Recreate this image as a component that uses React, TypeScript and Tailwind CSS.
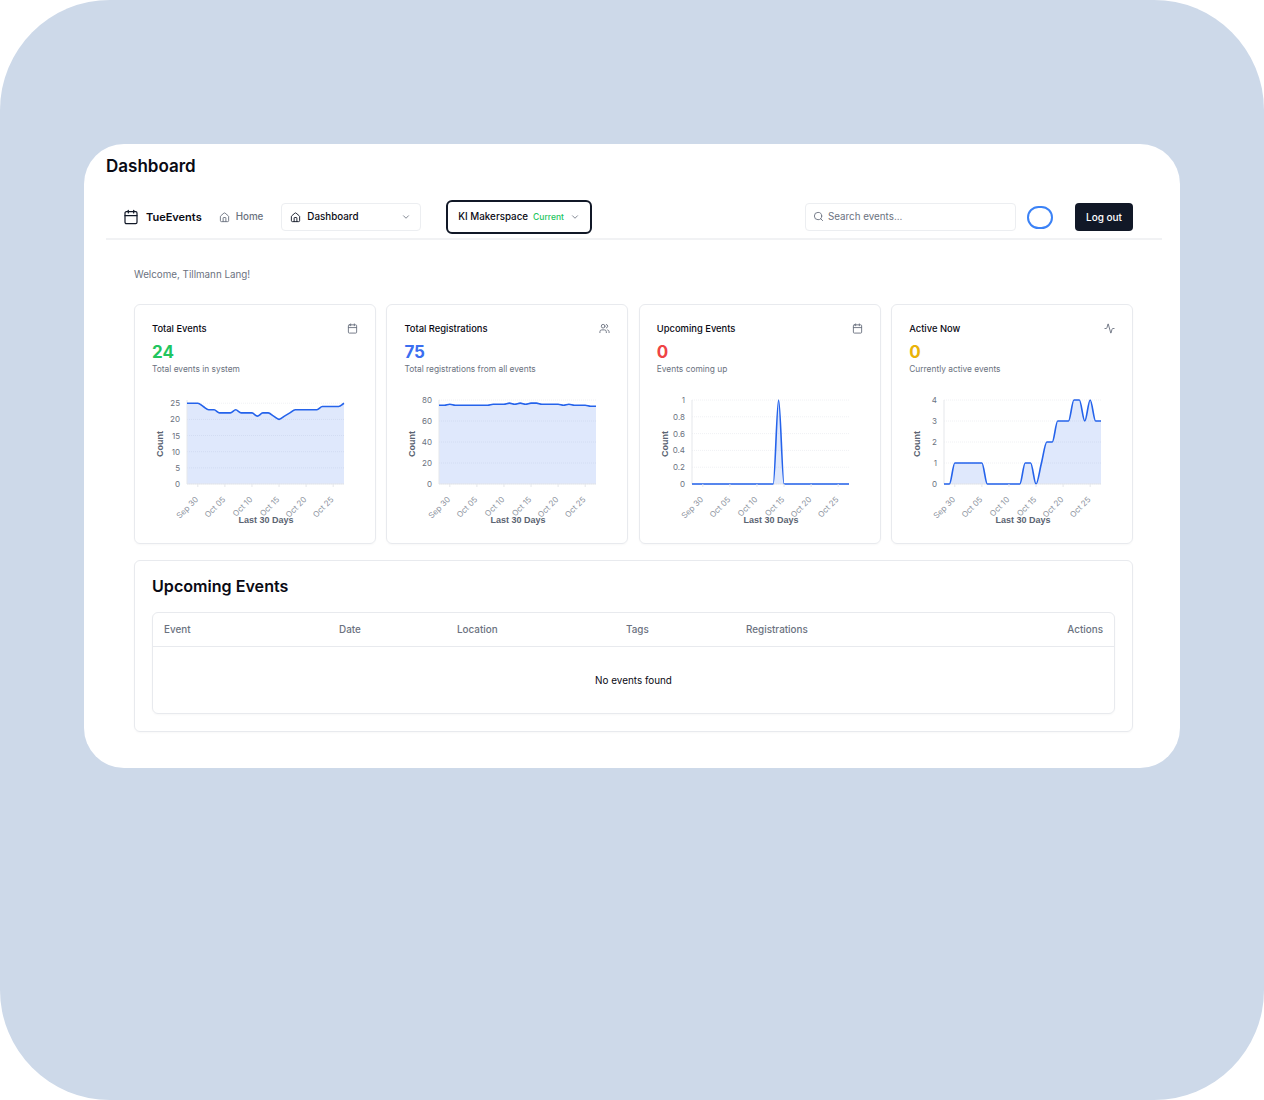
import React from 'react';
import { Activity, Calendar, ChevronDown, House, Search, Users } from 'lucide-react';

interface ChartProps {
  data: number[];
  max: number;
  ticks: number[];
}

const PLOT_LEFT = 35;
const PLOT_RIGHT = 192;
const PLOT_TOP = 15;
const PLOT_BOTTOM = 99;

const DATES = ['Sep 30', 'Oct 05', 'Oct 10', 'Oct 15', 'Oct 20', 'Oct 25'];

// same idea as d3's monotoneX, the line never overshoots the points
const monotonePath = (pts: [number, number][]) => {
  const n = pts.length;
  const slopes: number[] = [];
  for (let i = 0; i < n - 1; i++) {
    slopes.push((pts[i + 1][1] - pts[i][1]) / (pts[i + 1][0] - pts[i][0]));
  }
  const tangents = pts.map((_, i) => {
    if (i === 0) return slopes[0];
    if (i === n - 1) return slopes[n - 2];
    const a = slopes[i - 1];
    const b = slopes[i];
    if (a * b <= 0) return 0;
    return (2 * a * b) / (a + b);
  });
  let d = `M${pts[0][0]},${pts[0][1]}`;
  for (let i = 0; i < n - 1; i++) {
    const h = (pts[i + 1][0] - pts[i][0]) / 3;
    d += `C${pts[i][0] + h},${pts[i][1] + h * tangents[i]} ${pts[i + 1][0] - h},${pts[i + 1][1] - h * tangents[i + 1]} ${pts[i + 1][0]},${pts[i + 1][1]}`;
  }
  return d;
};

const MiniChart: React.FC<ChartProps> = ({ data, max, ticks }) => {
  const step = (PLOT_RIGHT - PLOT_LEFT) / (data.length - 1);
  const toY = (v: number) => PLOT_BOTTOM - (v / max) * (PLOT_BOTTOM - PLOT_TOP);
  const line = monotonePath(data.map((v, i) => [PLOT_LEFT + i * step, toY(v)]));
  const area = `${line}L${PLOT_RIGHT},${PLOT_BOTTOM}L${PLOT_LEFT},${PLOT_BOTTOM}Z`;

  return (
    <svg width="207" height="150" className="block">
      {ticks.map((t) => (
        <g key={t}>
          <line x1={PLOT_LEFT} x2={PLOT_RIGHT} y1={toY(t)} y2={toY(t)} stroke="#f0f1f4" strokeWidth="1" strokeDasharray="1 1" />
          <text x="28" y={toY(t) + 3} textAnchor="end" fontSize="8" fill="#6b7280" fontFamily="Inter, sans-serif">
            {t}
          </text>
        </g>
      ))}
      <path d={area} fill="#2563eb" fillOpacity="0.15" />
      <line x1={PLOT_LEFT} x2={PLOT_LEFT} y1={PLOT_TOP} y2={PLOT_BOTTOM} stroke="#e5e7eb" />
      <line x1={PLOT_LEFT} x2={PLOT_RIGHT} y1={PLOT_BOTTOM} y2={PLOT_BOTTOM} stroke="#e5e7eb" />
      <path d={line} fill="none" stroke="#2563eb" strokeWidth="1.6" />
      {DATES.map((label, i) => {
        const x = PLOT_LEFT + (2 + i * 5) * step;
        return (
          <g key={label}>
            <line x1={x} x2={x} y1={PLOT_BOTTOM} y2={PLOT_BOTTOM + 3} stroke="#e5e7eb" />
            <text
              x={x + 1}
              y={PLOT_BOTTOM + 16}
              textAnchor="end"
              fontSize="8"
              fill="#8b929e"
              fontFamily="Inter, sans-serif"
              transform={`rotate(-45 ${x + 1} ${PLOT_BOTTOM + 16})`}
            >
              {label}
            </text>
          </g>
        );
      })}
      <text x="114" y="138" textAnchor="middle" fontSize="9" fontWeight="700" fill="#5b6472" fontFamily="'Liberation Sans', sans-serif">
        Last 30 Days
      </text>
      <text
        x="11"
        y="59"
        textAnchor="middle"
        fontSize="9"
        fontWeight="700"
        fill="#5b6472"
        fontFamily="'Liberation Sans', sans-serif"
        transform="rotate(-90 11 59)"
      >
        Count
      </text>
    </svg>
  );
};

const stats = [
  {
    title: 'Total Events',
    value: '24',
    valueClass: 'text-[#22c55e]',
    note: 'Total events in system',
    icon: Calendar,
    max: 26,
    ticks: [0, 5, 10, 15, 20, 25],
    data: [25, 25, 25, 24, 23, 23, 22, 22, 22, 23, 22, 22, 22, 21, 22, 22, 21, 20, 21, 22, 23, 23, 23, 23, 23, 24, 24, 24, 24, 25],
  },
  {
    title: 'Total Registrations',
    value: '75',
    valueClass: 'text-[#3b6ef0]',
    note: 'Total registrations from all events',
    icon: Users,
    max: 80,
    ticks: [0, 20, 40, 60, 80],
    data: [75, 75, 76, 75, 75, 75, 75, 75, 75, 75, 76, 76, 76, 77, 76, 77, 76, 77, 77, 76, 76, 76, 76, 75, 76, 75, 75, 75, 74, 74],
  },
  {
    title: 'Upcoming Events',
    value: '0',
    valueClass: 'text-[#ef4444]',
    note: 'Events coming up',
    icon: Calendar,
    max: 1,
    ticks: [0, 0.2, 0.4, 0.6, 0.8, 1],
    data: [0, 0, 0, 0, 0, 0, 0, 0, 0, 0, 0, 0, 0, 0, 0, 0, 1, 0, 0, 0, 0, 0, 0, 0, 0, 0, 0, 0, 0, 0],
  },
  {
    title: 'Active Now',
    value: '0',
    valueClass: 'text-[#eab308]',
    note: 'Currently active events',
    icon: Activity,
    max: 4,
    ticks: [0, 1, 2, 3, 4],
    data: [0, 0, 1, 1, 1, 1, 1, 1, 0, 0, 0, 0, 0, 0, 0, 1, 1, 0, 1, 2, 2, 3, 3, 3, 4, 4, 3, 4, 3, 3],
  },
];

const columns = ['Event', 'Date', 'Location', 'Tags', 'Registrations'];

const App: React.FC = () => {
  return (
    <div className="h-[1100px] bg-white font-['Inter',sans-serif] text-[#0a0a14]">
      <div className="h-full rounded-[110px] bg-[#cdd9e9] px-[84px] pt-[144px]">
        <div className="h-[624px] rounded-[40px] bg-white px-[22px]">
          <h1 className="pt-[11px] text-[17px] leading-[22px] font-semibold">Dashboard</h1>

          <nav className="mr-[-4px] mt-[19px] flex h-[44px] items-center border-b-2 border-[#f1f2f4] pl-[17px] pr-[29px]">
            <Calendar className="h-[16px] w-[16px] text-[#111827]" strokeWidth={1.8} />
            <span className="ml-[7px] text-[11px] font-semibold">TueEvents</span>
            <House className="ml-[17px] h-[11px] w-[11px] text-[#6b7280]" />
            <span className="ml-[6px] text-[9.8px] font-medium text-[#6b7280]">Home</span>
            <div className="ml-[18px] flex h-[28px] w-[140px] items-center rounded-[4px] border border-[#eceef1] pl-[8px] pr-[9px]">
              <House className="h-[11px] w-[11px] text-[#111827]" />
              <span className="ml-[6px] text-[9.8px] font-medium">Dashboard</span>
              <ChevronDown className="ml-auto h-[10px] w-[10px] text-[#6b7280]" />
            </div>
            <div className="ml-[25px] flex h-[34px] w-[146px] items-center rounded-[6px] border-2 border-[#111827] pl-[10px]">
              <span className="text-[9.8px] font-medium">KI Makerspace</span>
              <span className="ml-[5px] text-[8.5px] font-medium text-[#22c55e]">Current</span>
              <ChevronDown className="ml-[6px] h-[10px] w-[10px] text-[#6b7280]" />
            </div>
            <div className="ml-auto flex h-[28px] w-[211px] items-center rounded-[4px] border border-[#eceef1] pl-[7px]">
              <Search className="-mt-[1px] h-[11px] w-[11px] text-[#6b7280]" />
              <span className="ml-[4px] text-[9.8px] text-[#6b7280]">Search events...</span>
            </div>
            <div className="ml-[11px] h-[23px] w-[26px] rounded-full border-2 border-[#3b82f6]" />
            <button className="ml-[22px] h-[28px] w-[58px] rounded-[4px] bg-[#111827] text-[10px] font-medium text-white">Log out</button>
          </nav>

          <main className="pl-[28px] pr-[25px]">
            <p className="mt-[28px] text-[9.8px] leading-[14px] text-[#6b7280]">Welcome, Tillmann Lang!</p>

            <div className="mt-[22px] grid grid-cols-4 gap-[10.6px]">
              {stats.map((s) => {
                const Icon = s.icon;
                return (
                  <div key={s.title} className="h-[240px] rounded-[6px] border border-[#e8eaee] px-[17px] pt-[17px] shadow-[0_1px_2px_rgba(0,0,0,0.03)]">
                    <div className="flex h-[14px] items-center justify-between">
                      <span className="text-[9.4px] font-medium">{s.title}</span>
                      <Icon className="-mt-[1px] h-[11px] w-[11px] text-[#6b7280]" />
                    </div>
                    <div className={`mt-[5px] text-[17px] leading-[22px] font-bold ${s.valueClass}`}>{s.value}</div>
                    <p className="text-[8.4px] leading-[12px] text-[#6b7280]">{s.note}</p>
                    <div className="mt-[10px]">
                      <MiniChart data={s.data} max={s.max} ticks={s.ticks} />
                    </div>
                  </div>
                );
              })}
            </div>

            <section className="mt-[16px] h-[172px] rounded-[6px] border border-[#e8eaee] px-[17px] pt-[14px] shadow-[0_1px_2px_rgba(0,0,0,0.03)]">
              <h2 className="text-[16.1px] leading-[23px] font-semibold">Upcoming Events</h2>
              <div className="mt-[14px] h-[102px] rounded-[6px] border border-[#e8eaee] shadow-[0_1px_2px_rgba(0,0,0,0.03)]">
                <div className="grid h-[34px] grid-cols-[175px_118px_169px_120px_1fr_auto] items-center border-b border-[#e8eaee] px-[11px] text-[9.9px] font-medium text-[#6b7280]">
                  {columns.map((c) => (
                    <span key={c}>{c}</span>
                  ))}
                  <span>Actions</span>
                </div>
                <div className="flex h-[66px] items-center justify-center text-[9.9px]">No events found</div>
              </div>
            </section>
          </main>
        </div>
      </div>
    </div>
  );
};

export default App;
